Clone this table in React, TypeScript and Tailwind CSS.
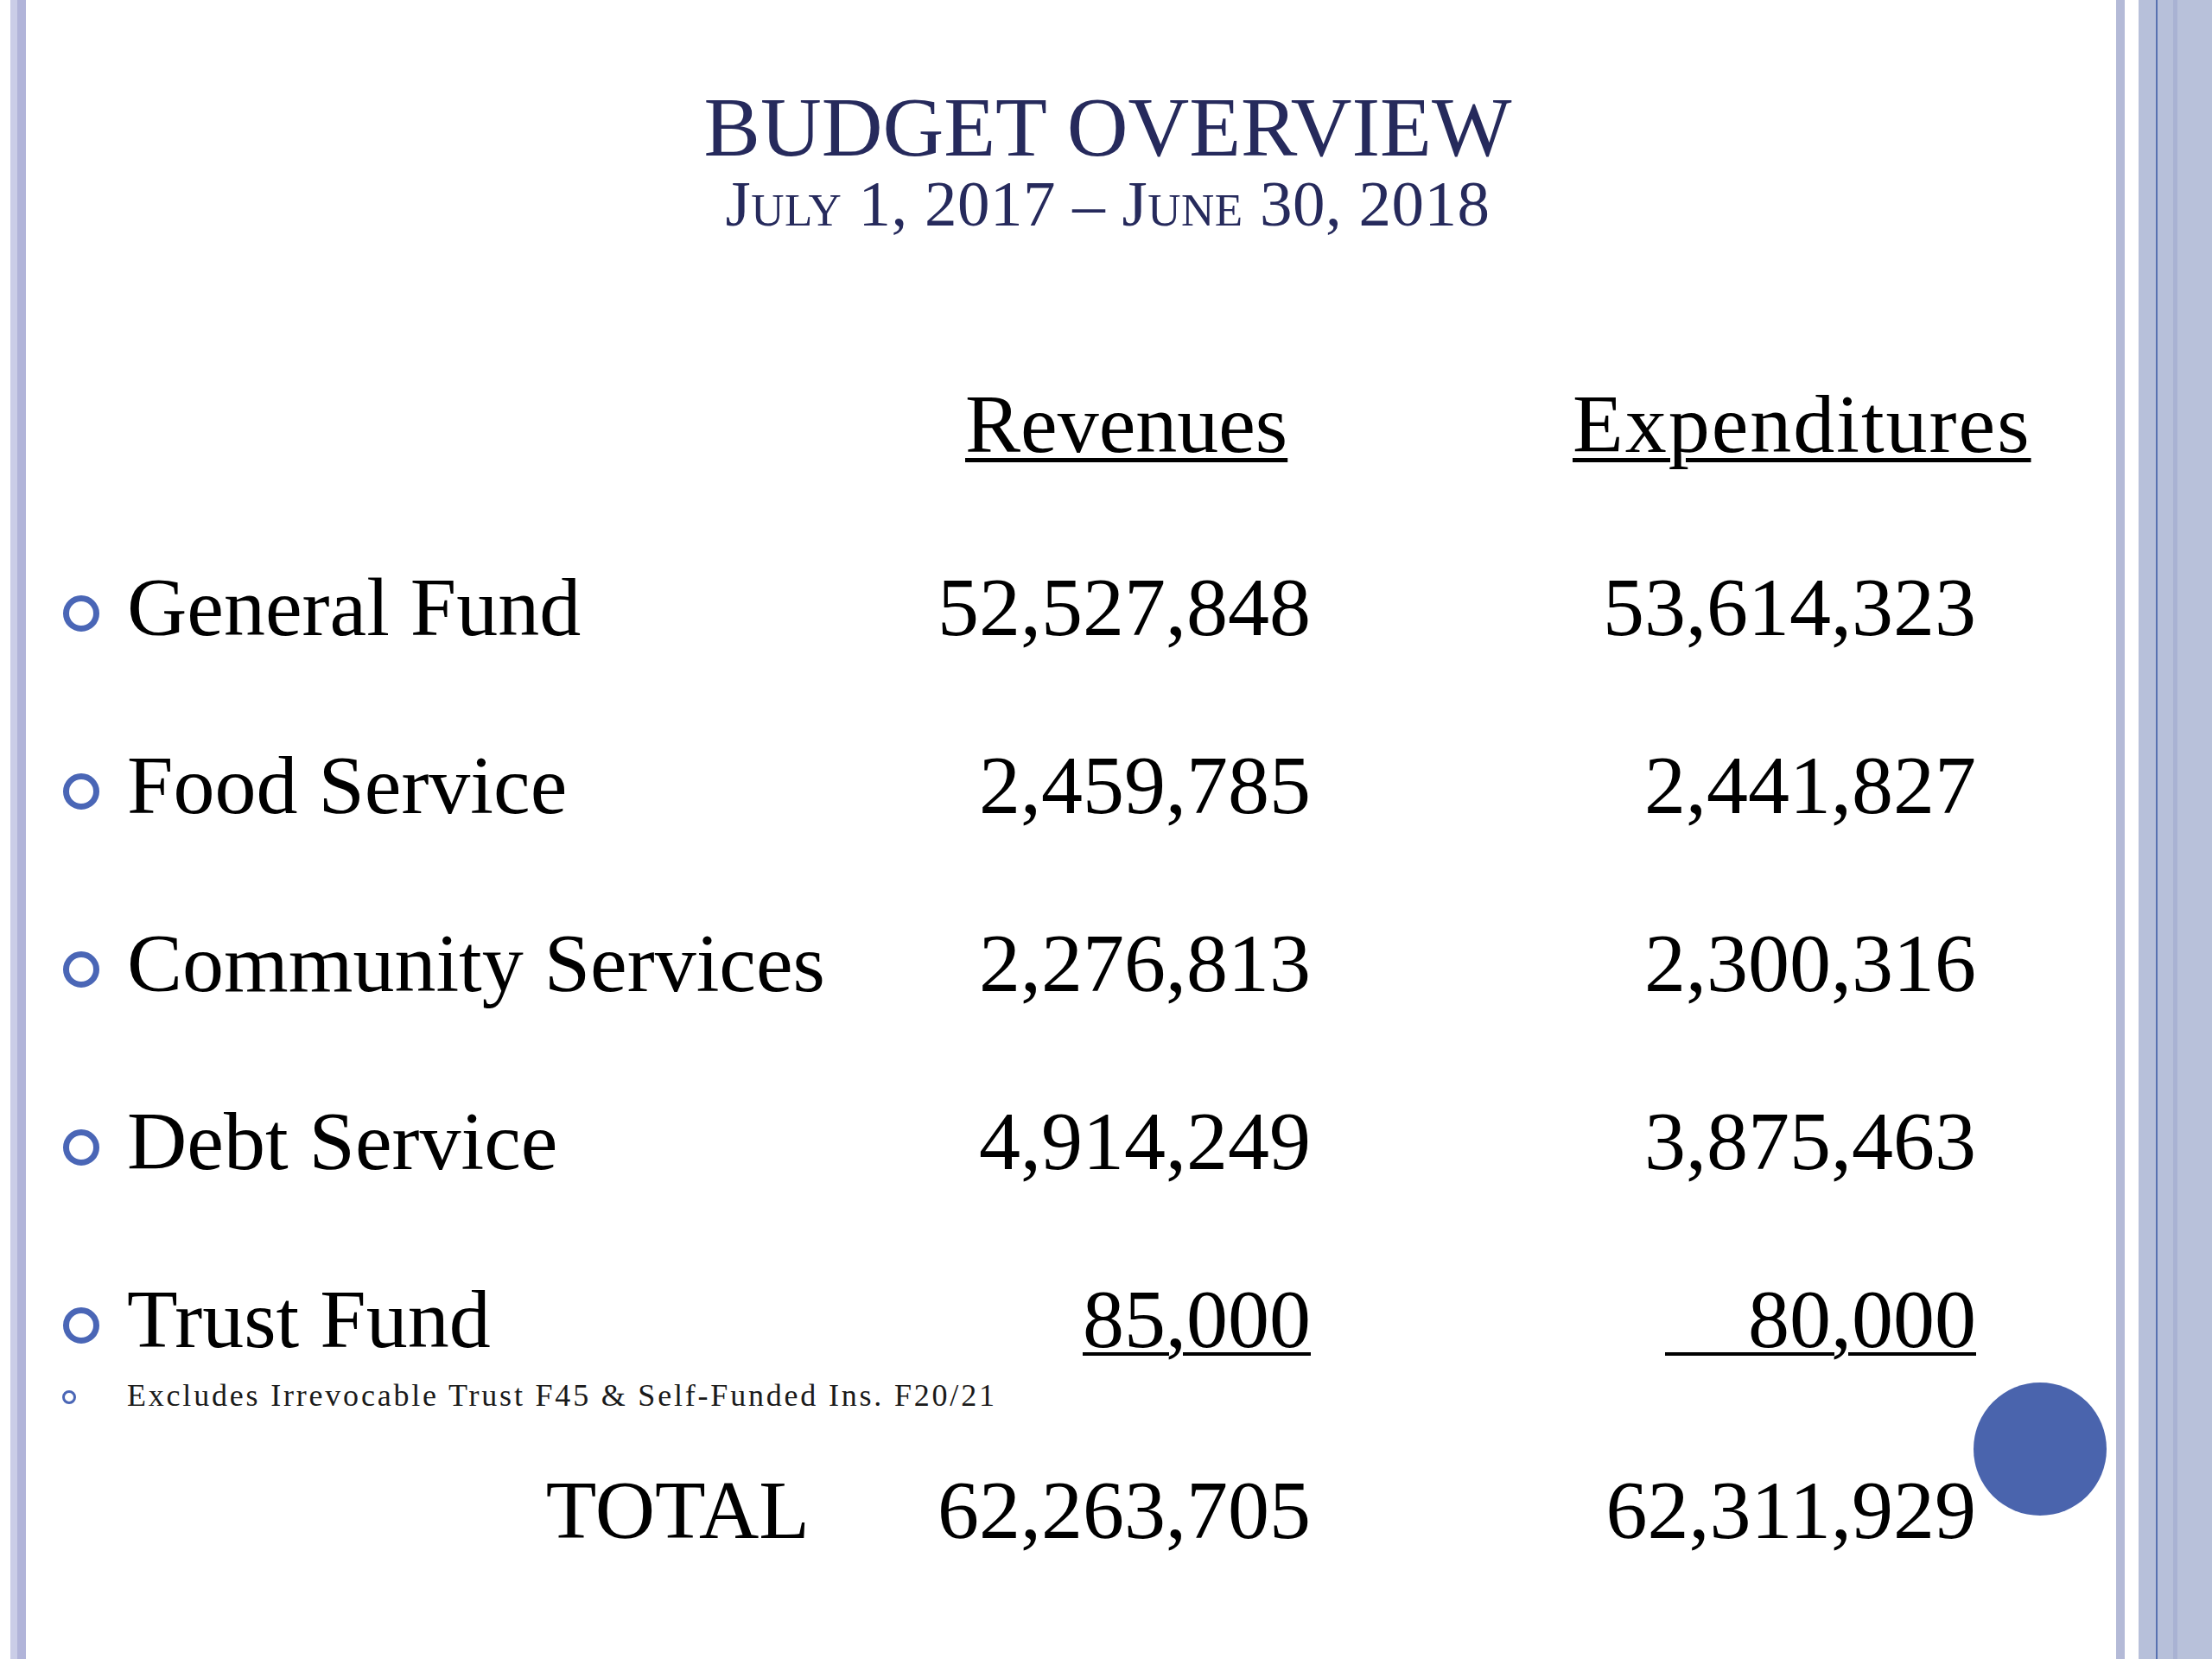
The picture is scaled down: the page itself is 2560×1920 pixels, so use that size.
const FUNDS = [
  { label: "General Fund",       rev: "52,527,848", exp: "53,614,323" },
  { label: "Food Service",       rev: "2,459,785",  exp: "2,441,827"  },
  { label: "Community Services", rev: "2,276,813",  exp: "2,300,316"  },
  { label: "Debt Service",       rev: "4,914,249",  exp: "3,875,463"  },
];

function Ring() {
  return (
    <div className="ml-[43px] mt-[46px] h-[42px] w-[42px] shrink-0 rounded-full border-[7px] border-[#4a66b6]" />
  );
}

function Row({ label, rev, exp }: { label: React.ReactNode; rev: React.ReactNode; exp: React.ReactNode }) {
  return (
    <div className="flex h-[120px] items-start text-[96px] leading-[120px] text-black">
      <Ring />
      <div className="ml-[32px] w-[830px] whitespace-nowrap">{label}</div>
      <div className="w-[540px] whitespace-nowrap text-right">{rev}</div>
      <div className="w-[770px] whitespace-nowrap text-right">{exp}</div>
    </div>
  );
}

export default function App() {
  return (
    <div className="relative flex h-[1920px] w-[2560px] overflow-hidden bg-white font-['Liberation_Serif',serif]">
      {/* left frame ------------------------------------------------ */}
      <div className="w-[12px] shrink-0 bg-white" />
      <div className="w-[8px] shrink-0 bg-[#cacde7]" />
      <div className="w-[10px] shrink-0 bg-[#b1b4d9]" />

      {/* slide body ------------------------------------------------ */}
      <div className="flex w-[2419px] shrink-0 flex-col">
        <div className="pl-[85px] pt-[98px] text-center text-[98px] leading-none text-[#262a5c]">
          BUDGET OVERVIEW
        </div>
        <div className="mt-[2px] pl-[85px] text-center text-[75px] leading-none tracking-[0.5px] text-[#262a5c] [font-variant:small-caps]">
          July 1, 2017 – June 30, 2018
        </div>

        {/* column headers */}
        <div className="mt-[158px] flex h-[120px] text-[96px] leading-[120px] text-black">
          <div className="w-[1087px] shrink-0" />
          <div className="w-[703px] shrink-0">
            <span className="underline decoration-[5px] underline-offset-[7px]">Revenues</span>
          </div>
          <div>
            <span className="underline decoration-[5px] underline-offset-[7px] tracking-[2px]">Expenditures</span>
          </div>
        </div>

        <div className="mt-[92px] flex flex-col gap-[86px]">
          {FUNDS.map((f) => (
            <Row key={f.label} label={f.label} rev={f.rev} exp={f.exp} />
          ))}
          <Row
            label="Trust Fund"
            rev={<span className="underline decoration-[4px] underline-offset-[6px]">85,000</span>}
            exp={<span className="underline decoration-[4px] underline-offset-[6px]">{"\u00a0\u00a0\u00a0\u00a080,000"}</span>}
          />
        </div>

        {/* footnote */}
        <div className="mt-[10px] flex h-[36px] items-start text-[36px] leading-none tracking-[2.8px] text-[#1a1a1a]">
          <div className="ml-[42px] mt-[12px] h-[16px] w-[16px] shrink-0 rounded-full border-[3px] border-[#4a66b6]" />
          <div className="ml-[59px] whitespace-nowrap">
            Excludes Irrevocable Trust F45 &amp; Self-Funded Ins. F20/21
          </div>
        </div>

        {/* total */}
        <div className="mt-[55px] flex h-[120px] text-[96px] leading-[120px] text-black">
          <div className="w-[907px] shrink-0 text-right">TOTAL</div>
          <div className="w-[580px] shrink-0 text-right">62,263,705</div>
          <div className="w-[770px] shrink-0 text-right">62,311,929</div>
        </div>
      </div>

      {/* right frame ------------------------------------------------ */}
      <div className="w-[10px] shrink-0 bg-[#b4bad7]" />
      <div className="w-[16px] shrink-0 bg-white" />
      <div className="flex flex-1">
        <div className="w-[20px] bg-[#b7c0da]" />
        <div className="w-[2px] bg-[#5871b1]" />
        <div className="w-[18px] bg-[#b7c0da]" />
        <div className="w-[5px] bg-[#a9b2d3]" />
        <div className="flex-1 bg-[#b8c1da]" />
      </div>

      {/* decorative dot over the slide corner */}
      <div className="absolute left-[2284px] top-[1600px] h-[154px] w-[154px] rounded-full bg-[#4a64ad]" />
    </div>
  );
}
